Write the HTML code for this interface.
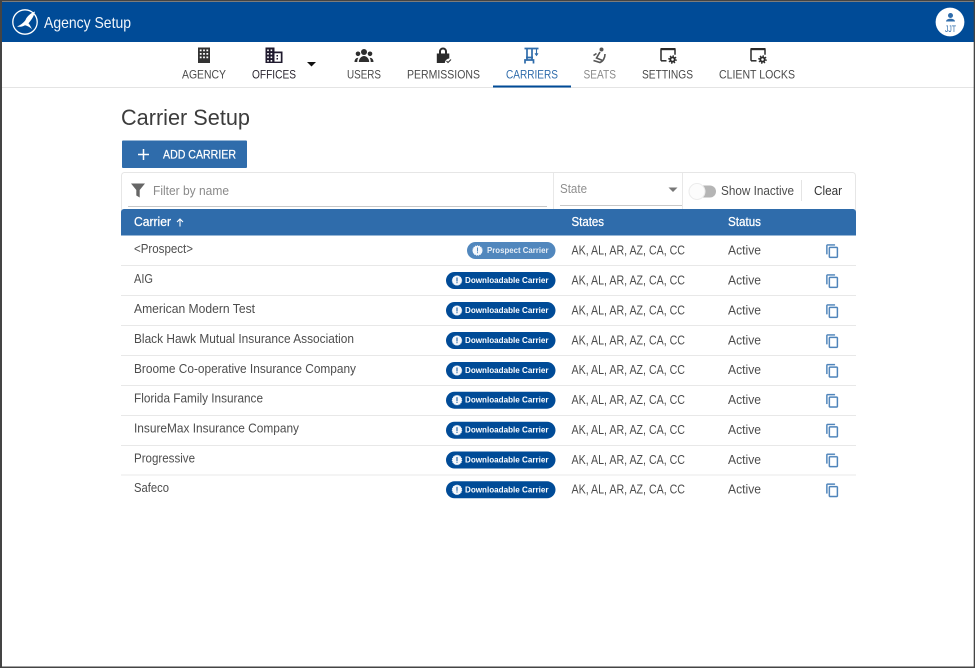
<!DOCTYPE html>
<html><head><meta charset="utf-8"><title>Agency Setup</title>
<style>
html,body{margin:0;padding:0;background:#fff}
svg{display:block}
text{font-family:"Liberation Sans",sans-serif}
</style></head>
<body>
<svg width="975" height="668" viewBox="0 0 975 668" xmlns="http://www.w3.org/2000/svg">
<rect width="975" height="668" fill="#fff"/>
<!-- top bar -->
<rect x="0" y="2" width="975" height="40" fill="#004b97"/>
<!-- logo -->
<circle cx="25" cy="22" r="12.2" fill="none" stroke="#fff" stroke-width="1.3"/>
<path d="M35 11.500C31 13 27 16 25.500 20C24 22.300 21 25 17 26.500C20 27.200 23 26.500 25 25.200C27 25.700 30 27 32 29.300C31 26.800 29.800 24.800 28.500 23.200C31.500 20 34 16 35 11.500Z" fill="#fff"/>
<text x="44" y="28" font-size="16" fill="#f2f6fb" textLength="87" lengthAdjust="spacingAndGlyphs">Agency Setup</text>
<!-- avatar -->
<circle cx="950" cy="22" r="14.400" fill="#fff"/>
<circle cx="950.500" cy="15.500" r="2.500" fill="#2f6cab"/>
<path d="M946 21.500c0-2 2.500-2.800 4.500-2.800s4.500.8 4.500 2.800z" fill="#2f6cab"/>
<text x="945" y="32" font-size="9.500" fill="#2f6cab" textLength="11" lengthAdjust="spacingAndGlyphs">JJT</text>
<!-- nav underline -->
<rect x="0" y="87" width="975" height="1" fill="#e4e4e4"/>
<rect x="493" y="85.500" width="78" height="2" fill="#004b97"/>
<!-- agency icon -->
<path fill-rule="evenodd" fill="#333" d="M198 47.500h12v15.500h-12zM199.800 49.500v1.800h1.800v-1.800zM203.100 49.500v1.800h1.800v-1.800zM206.400 49.500v1.800h1.800v-1.800zM199.800 53v1.800h1.800v-1.800zM203.100 53v1.800h1.800v-1.800zM206.400 53v1.800h1.800v-1.800zM199.800 56.500v1.800h1.800v-1.800zM203.100 56.500v1.800h1.800v-1.800zM206.400 56.500v1.800h1.800v-1.800z"/>
<!-- offices icon -->
<path fill-rule="evenodd" fill="#1f1a2e" d="M265.500 47.500h9v4h8v11.500h-17zM267.200 49.500v1.600h1.600v-1.600zM270.600 49.500v1.600h1.600v-1.600zM267.200 53v1.600h1.600v-1.600zM270.600 53v1.600h1.600v-1.600zM267.200 56.500v1.600h1.600v-1.600zM270.600 56.500v1.600h1.600v-1.600zM267.200 60v1.600h1.600v-1.600zM270.600 60v1.600h1.600v-1.600zM274.500 53.300v8.300h6.300v-8.300zM276.500 55h1.500v1.500h-1.500zM276.500 58h1.500v1.500h-1.500z"/>
<path d="M307 62h9l-4.500 4.500z" fill="#111"/>
<!-- users icon -->
<g fill="#2e2e2e">
<circle cx="364" cy="52" r="3"/><circle cx="358" cy="53.800" r="2.300"/><circle cx="370" cy="53.800" r="2.300"/>
<path d="M358.800 62c0-3.500 2.700-6 5.200-6s5.200 2.500 5.200 6z"/>
<path d="M354.500 62c0-2.800 1.500-4.300 3.900-4.300-.8 1-1.100 2.500-1.100 4.300zM373.500 62c0-2.800-1.500-4.300-3.900-4.300 .8 1 1.100 2.500 1.100 4.300z"/>
</g>
<!-- permissions icon -->
<path fill="#2b2b2b" fill-rule="evenodd" d="M439 53.500v-2a4 4 0 0 1 8 0v2h2.300v5c-2.500.2-4.200 2-4.500 4.500H436.800V53.500zM441 53.500h4v-2a2 2 0 0 0-4 0z"/>
<path d="M446.500 61l1.500 1.500 3-3" fill="none" stroke="#333" stroke-width="1.100"/>
<!-- carriers icon -->
<g fill="none" stroke="#2f6cab" stroke-width="1.700">
<path d="M524.500 48.500h14M527 48.500v12M532 48.500v12M526 57.500h7"/>
<path d="M525 63.500v-3.500h8.500v3.500"/>
</g>
<path d="M536.500 49v5.500m-1.500-1.200l1.500 2 1.500-2" fill="none" stroke="#2f6cab" stroke-width="1.100"/>
<!-- seats icon -->
<g fill="none" stroke="#555" stroke-width="1.600">
<path d="M600 52l-3.500 6 5.500 2.200"/>
<path d="M605 54c0 4-2 7.300-5 8.500l-6.500-2"/>
<path d="M596.500 53.500l-3 2"/>
</g>
<circle cx="601.500" cy="49.500" r="2" fill="#555"/>
<!-- settings icons -->
<g id="ws">
<path d="M661 60.800v-11a1 1 0 0 1 1-1h12a1 1 0 0 1 1 1v5" fill="none" stroke="#2a2a2a" stroke-width="1.500"/>
<rect x="660.500" y="48" width="15" height="2.200" fill="#2a2a2a"/>
<path d="M661 60.800h5.500" stroke="#2a2a2a" stroke-width="1.500"/>
<circle cx="672.500" cy="59.500" r="2.200" fill="none" stroke="#2a2a2a" stroke-width="1.900"/>
<circle cx="672.500" cy="59.500" r="3.700" fill="none" stroke="#2a2a2a" stroke-width="1.200" stroke-dasharray="1.400 1.500"/>
</g>
<use href="#ws" x="90"/>
<!-- nav labels -->
<g font-size="12" fill="#4a4a4a">
<text x="182" y="78.500" textLength="44" lengthAdjust="spacingAndGlyphs">AGENCY</text>
<text x="252" y="78.500" textLength="44" lengthAdjust="spacingAndGlyphs" fill="#2a2530">OFFICES</text>
<text x="347" y="78.500" textLength="34" lengthAdjust="spacingAndGlyphs">USERS</text>
<text x="407" y="78.500" textLength="73" lengthAdjust="spacingAndGlyphs">PERMISSIONS</text>
<text x="506" y="78.500" textLength="52" lengthAdjust="spacingAndGlyphs" fill="#2f6cab">CARRIERS</text>
<text x="583.500" y="78.500" textLength="32.500" lengthAdjust="spacingAndGlyphs" fill="#8a8a8a">SEATS</text>
<text x="642" y="78.500" textLength="51" lengthAdjust="spacingAndGlyphs">SETTINGS</text>
<text x="719" y="78.500" textLength="76" lengthAdjust="spacingAndGlyphs">CLIENT LOCKS</text>
</g>
<!-- title -->
<text x="121" y="125" font-size="22" fill="#3c3c3c" textLength="129" lengthAdjust="spacingAndGlyphs">Carrier Setup</text>
<!-- add button -->
<rect x="122" y="140.500" width="125" height="27.500" rx="1" fill="#2f6cab"/>
<path d="M138 154.500h11M143.500 149v11" stroke="#fff" stroke-width="1.500"/>
<text x="163" y="158.500" font-size="12" fill="#fff" stroke="#fff" stroke-width=".25" textLength="73" lengthAdjust="spacingAndGlyphs">ADD CARRIER</text>
<!-- filter bar -->
<rect x="121.500" y="172.500" width="734" height="40" rx="3" fill="#fff" stroke="#e6e6e6"/>
<path d="M131 183.500h14l-5.300 6.500v7.500l-3.400-2v-5.500z" fill="#666"/>
<text x="153" y="195" font-size="12.500" fill="#8a8a8a" textLength="76" lengthAdjust="spacingAndGlyphs">Filter by name</text>
<rect x="128" y="206" width="419" height="1" fill="#c8c8c8"/>
<rect x="553" y="173" width="1" height="36" fill="#e8e8e8"/>
<rect x="682" y="173" width="1" height="36" fill="#e8e8e8"/>
<text x="560" y="193" font-size="12.500" fill="#8f8f8f" textLength="27" lengthAdjust="spacingAndGlyphs">State</text>
<rect x="560" y="205" width="122" height="1" fill="#c8c8c8"/>
<path d="M668.500 187.500h9l-4.500 4.500z" fill="#777"/>
<!-- toggle -->
<rect x="692" y="185.500" width="24" height="12" rx="6" fill="#b5b5b5"/>
<circle cx="697" cy="191.500" r="8" fill="#fcfcfc" stroke="#ececec"/>
<text x="721" y="195" font-size="12.500" fill="#4d4d4d" textLength="73" lengthAdjust="spacingAndGlyphs">Show Inactive</text>
<rect x="801" y="180" width="1" height="21" fill="#e4e4e4"/>
<text x="814" y="195" font-size="12.500" fill="#333" textLength="28" lengthAdjust="spacingAndGlyphs">Clear</text>
<!-- table header -->
<path d="M121 212a3 3 0 0 1 3-3h729a3 3 0 0 1 3 3v23.500H121z" fill="#2f6cab"/>
<g font-size="12.500" fill="#fff" stroke="#fff" stroke-width=".25">
<text x="134" y="226" textLength="37" lengthAdjust="spacingAndGlyphs">Carrier</text>
<text x="571.500" y="226" textLength="32.500" lengthAdjust="spacingAndGlyphs">States</text>
<text x="728" y="226" textLength="33" lengthAdjust="spacingAndGlyphs">Status</text>
</g>
<path d="M180 226.500v-7M177 222l3-3 3 3" fill="none" stroke="#fff" stroke-width="1.100"/>
<!-- separators -->
<g fill="#e8e8e8">
<rect x="121" y="265" width="735" height="1"/><rect x="121" y="295" width="735" height="1"/><rect x="121" y="325" width="735" height="1"/><rect x="121" y="355" width="735" height="1"/><rect x="121" y="385" width="735" height="1"/><rect x="121" y="415" width="735" height="1"/><rect x="121" y="445" width="735" height="1"/><rect x="121" y="474.500" width="735" height="1"/>
</g>
<!-- names -->
<g font-size="12.500" fill="#4d4d4d">
<text x="134" y="253" textLength="59" lengthAdjust="spacingAndGlyphs">&lt;Prospect&gt;</text>
<text x="134" y="283" textLength="19" lengthAdjust="spacingAndGlyphs">AIG</text>
<text x="134" y="313" textLength="121" lengthAdjust="spacingAndGlyphs">American Modern Test</text>
<text x="134" y="343" textLength="220" lengthAdjust="spacingAndGlyphs">Black Hawk Mutual Insurance Association</text>
<text x="134" y="373" textLength="222" lengthAdjust="spacingAndGlyphs">Broome Co-operative Insurance Company</text>
<text x="134" y="402.500" textLength="129" lengthAdjust="spacingAndGlyphs">Florida Family Insurance</text>
<text x="134" y="432.500" textLength="165" lengthAdjust="spacingAndGlyphs">InsureMax Insurance Company</text>
<text x="134" y="462.500" textLength="61" lengthAdjust="spacingAndGlyphs">Progressive</text>
<text x="134" y="492" textLength="35" lengthAdjust="spacingAndGlyphs">Safeco</text>
</g>
<!-- states / status -->
<g font-size="12.500" fill="#4d4d4d">
<text x="571.500" y="254.500" textLength="113.500" lengthAdjust="spacingAndGlyphs">AK, AL, AR, AZ, CA, CC</text><text x="728" y="254.500" textLength="33" lengthAdjust="spacingAndGlyphs">Active</text>
<text x="571.500" y="284.500" textLength="113.500" lengthAdjust="spacingAndGlyphs">AK, AL, AR, AZ, CA, CC</text><text x="728" y="284.500" textLength="33" lengthAdjust="spacingAndGlyphs">Active</text>
<text x="571.500" y="314.500" textLength="113.500" lengthAdjust="spacingAndGlyphs">AK, AL, AR, AZ, CA, CC</text><text x="728" y="314.500" textLength="33" lengthAdjust="spacingAndGlyphs">Active</text>
<text x="571.500" y="344.500" textLength="113.500" lengthAdjust="spacingAndGlyphs">AK, AL, AR, AZ, CA, CC</text><text x="728" y="344.500" textLength="33" lengthAdjust="spacingAndGlyphs">Active</text>
<text x="571.500" y="374" textLength="113.500" lengthAdjust="spacingAndGlyphs">AK, AL, AR, AZ, CA, CC</text><text x="728" y="374" textLength="33" lengthAdjust="spacingAndGlyphs">Active</text>
<text x="571.500" y="404" textLength="113.500" lengthAdjust="spacingAndGlyphs">AK, AL, AR, AZ, CA, CC</text><text x="728" y="404" textLength="33" lengthAdjust="spacingAndGlyphs">Active</text>
<text x="571.500" y="434" textLength="113.500" lengthAdjust="spacingAndGlyphs">AK, AL, AR, AZ, CA, CC</text><text x="728" y="434" textLength="33" lengthAdjust="spacingAndGlyphs">Active</text>
<text x="571.500" y="464" textLength="113.500" lengthAdjust="spacingAndGlyphs">AK, AL, AR, AZ, CA, CC</text><text x="728" y="464" textLength="33" lengthAdjust="spacingAndGlyphs">Active</text>
<text x="571.500" y="493.500" textLength="113.500" lengthAdjust="spacingAndGlyphs">AK, AL, AR, AZ, CA, CC</text><text x="728" y="493.500" textLength="33" lengthAdjust="spacingAndGlyphs">Active</text>
</g>
<!-- prospect badge -->
<rect x="467" y="242" width="88.500" height="17" rx="8.500" fill="#5187bd"/>
<circle cx="477.500" cy="250.500" r="4.800" fill="#f4f7fb" stroke="#f4f7fb" stroke-width=".8" stroke-dasharray="1 1"/>
<rect x="477" y="247.500" width="1" height="4" fill="#5187bd"/><rect x="477" y="252.200" width="1" height="1" fill="#5187bd"/>
<text x="487" y="253" font-size="8" font-weight="700" fill="#e8eff7" textLength="61.500" lengthAdjust="spacingAndGlyphs">Prospect Carrier</text>
<!-- downloadable badges -->
<g id="dl">
<rect x="446" y="272" width="109.500" height="17" rx="8.500" fill="#004b97"/>
<circle cx="457" cy="280.500" r="4.800" fill="#f4f7fb" stroke="#f4f7fb" stroke-width=".8" stroke-dasharray="1 1"/>
<rect x="456.500" y="277.500" width="1" height="4" fill="#004b97"/><rect x="456.500" y="282.200" width="1" height="1" fill="#004b97"/>
<text x="465" y="283" font-size="8" font-weight="700" fill="#fff" textLength="83.500" lengthAdjust="spacingAndGlyphs">Downloadable Carrier</text>
</g>
<use href="#dl" y="30"/><use href="#dl" y="60"/><use href="#dl" y="90"/><use href="#dl" y="119.700"/><use href="#dl" y="149.700"/><use href="#dl" y="179.500"/><use href="#dl" y="209.300"/>
<!-- copy icons -->
<g id="cp" transform="translate(825,243.700) scale(.62)"><path fill="#4f85bb" stroke="#4f85bb" stroke-width=".4" d="M16 1H4c-1.100 0-2 .9-2 2v14h2V3h12V1zm3 4H8c-1.100 0-2 .9-2 2v14c0 1.100.9 2 2 2h11c1.100 0 2-.9 2-2V7c0-1.100-.9-2-2-2zm0 16H8V7h11v14z"/></g>
<use href="#cp" y="30"/><use href="#cp" y="60"/><use href="#cp" y="90"/><use href="#cp" y="119.700"/><use href="#cp" y="149.700"/><use href="#cp" y="179.500"/><use href="#cp" y="209.300"/><use href="#cp" y="239.200"/>
<!-- window border -->
<rect x="0" y="0" width="975" height="1.700" fill="#444"/>
<rect x="0" y="0" width="2" height="668" fill="#444"/>
<rect x="973.700" y="0" width="1.300" height="668" fill="#444"/>
<rect x="0" y="666.500" width="975" height="1.500" fill="#444"/>
</svg>
</body></html>
